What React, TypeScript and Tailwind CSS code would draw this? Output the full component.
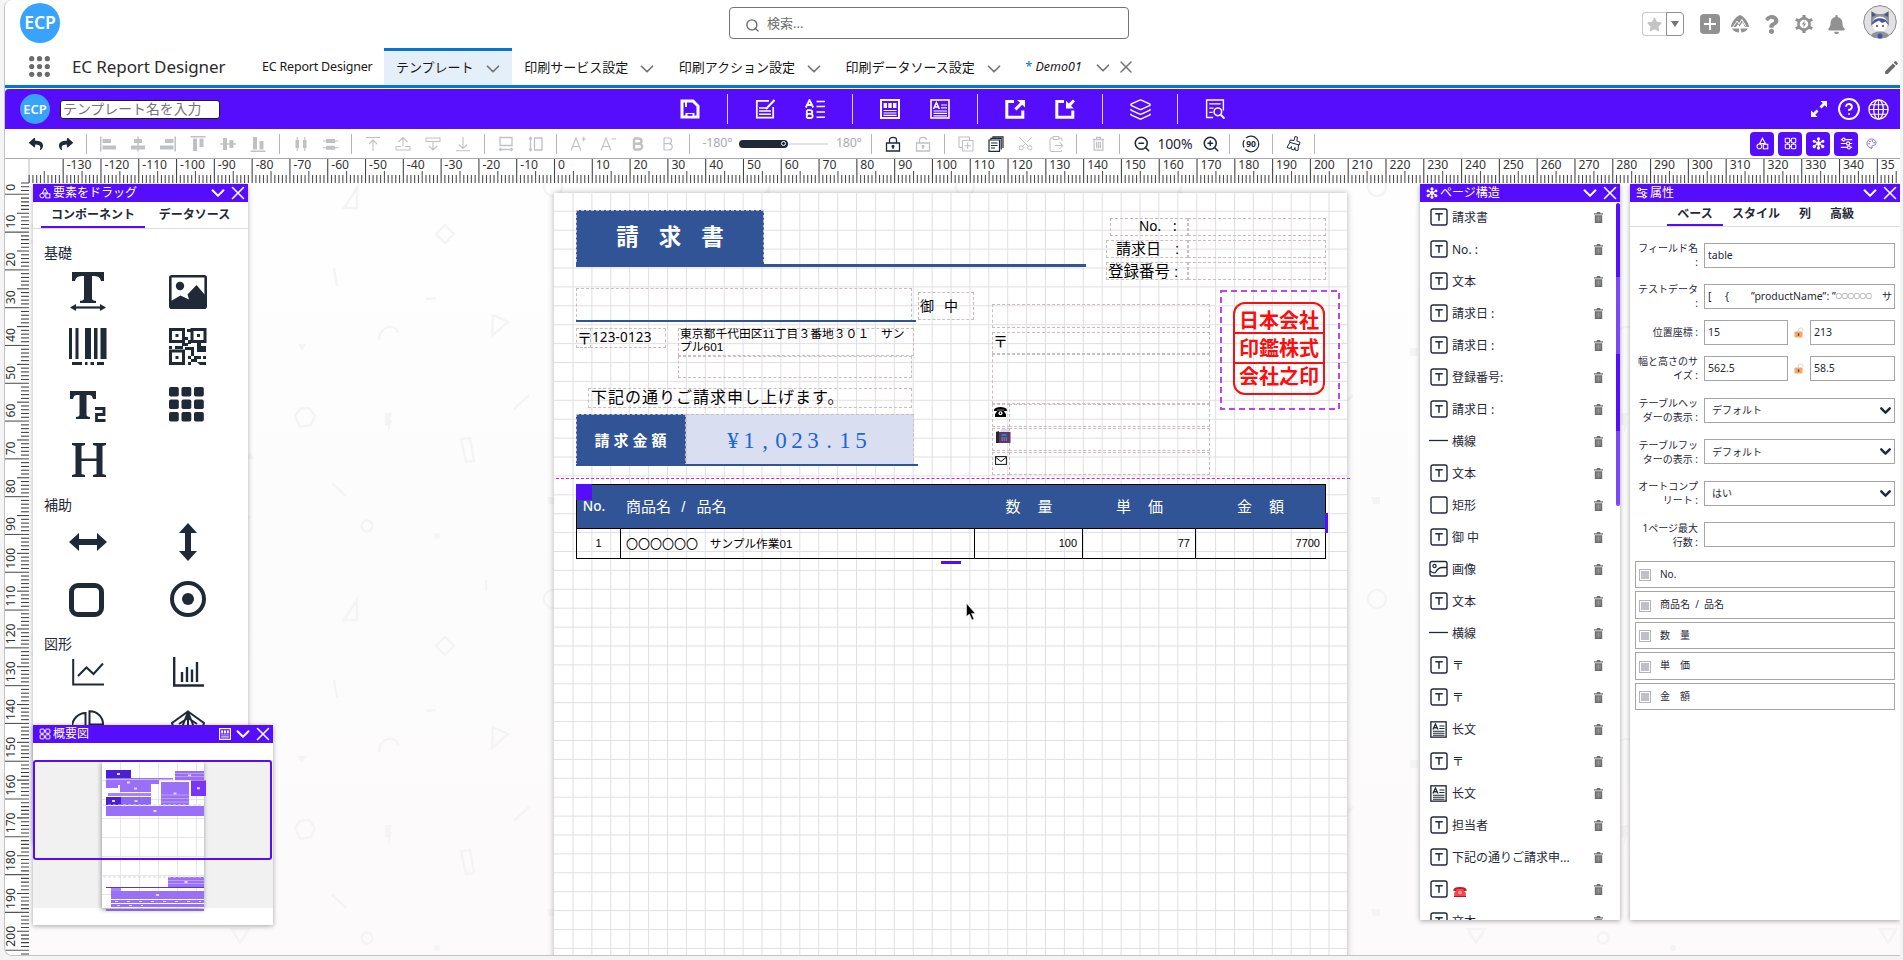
import React from "react";
import { FaReply, FaShare, FaStar, FaBell, FaQuestion } from "react-icons/fa";
import { MdEdit } from "react-icons/md";
import {
  ChevronDown, X, Search, Layers, CircleHelp, Scissors, ZoomIn, ZoomOut, Palette, ClipboardPaste,
} from "lucide-react";

const MM = 96 / 25.4;

type SvgProps = { w?: number; h?: number; vb?: string; className?: string; children: React.ReactNode };
const Svg = ({ w = 16, h, vb = "0 0 16 16", className = "", children }: SvgProps) => (
  <svg width={w} height={h ?? w} viewBox={vb} className={"shrink-0 " + className} fill="none" stroke="currentColor" strokeWidth="1.3">
    {children}
  </svg>
);
const F = { fill: "currentColor", stroke: "none" } as const;

/* ---------- shared glyphs ---------- */
const ShapesIcon = ({ s = 12 }) => (
  <Svg w={s} vb="0 0 16 16">
    <path d="M8 1.5 L11.5 8 H4.5 Z" />
    <circle cx="4.2" cy="11.5" r="3" />
    <rect x="9" y="9" width="5.5" height="5.5" />
  </Svg>
);
const TilesIcon = ({ s = 12 }) => (
  <Svg w={s}>
    <rect x="1.5" y="1.5" width="5.5" height="5.5" rx="1" />
    <rect x="9" y="1.5" width="5.5" height="5.5" rx="1" />
    <rect x="1.5" y="9" width="5.5" height="5.5" rx="1" />
    <rect x="9" y="9" width="5.5" height="5.5" rx="1" />
    <path d="M7 4.2 H9 M4.2 7 V9 M11.8 7 V9 M7 11.8 H9" />
  </Svg>
);
const NodesIcon = ({ s = 12 }) => (
  <Svg w={s} className="stroke-[1.4]">
    <path d="M8 2 V14 M2.5 5 L13.5 11 M13.5 5 L2.5 11" />
    <circle cx="8" cy="2.3" r="1.4" fill="currentColor" />
    <circle cx="2.6" cy="5.2" r="1.2" fill="currentColor" />
    <circle cx="13.4" cy="5.2" r="1.2" fill="currentColor" />
    <circle cx="8" cy="8" r="2" fill="currentColor" />
    <circle cx="2.8" cy="11.6" r="1.4" fill="currentColor" />
    <circle cx="13.2" cy="11.6" r="1.4" fill="currentColor" />
    <circle cx="8" cy="13.6" r="1.4" fill="currentColor" />
  </Svg>
);
const SlidersIcon = ({ s = 12 }) => (
  <Svg w={s} className="stroke-[1.4]">
    <path d="M1 3.2 H3 M6.5 3.2 H15 M1 8 H8 M12 8 H15 M1 12.8 H9 M13 12.8 H15" />
    <circle cx="4.5" cy="3.2" r="1.8" />
    <circle cx="10" cy="8" r="2" />
    <circle cx="11" cy="12.8" r="1.8" />
  </Svg>
);
const TableDoc = ({ s = 20 }) => (
  <Svg w={s} vb="0 0 20 20">
    <rect x="1" y="1" width="18" height="18" strokeWidth="2" />
    <rect x="3.6" y="4" width="3.4" height="5" {...F} />
    <rect x="8.3" y="4" width="3.4" height="5" {...F} />
    <rect x="13" y="4" width="3.4" height="5" {...F} />
    <path d="M3.5 11.5 H16.5 M3.5 14 H16.5 M3.5 16.4 H16.5" strokeWidth="1.2" />
  </Svg>
);
const LongText = ({ s = 20 }) => (
  <Svg w={s} vb="0 0 20 20">
    <rect x="1" y="1" width="18" height="18" strokeWidth="1.6" />
    <path d="M3.5 10 L6.4 3.6 L9.4 10 M4.6 8 H8.4" strokeWidth="1.6" />
    <path d="M11 6 H17 M11 8.8 H17 M3.5 12 H17 M3.5 14.4 H17 M3.5 16.8 H17" strokeWidth="1.2" />
  </Svg>
);
const Ecp = ({ big = false }) => (
  <div
    className={
      "flex shrink-0 items-center justify-center rounded-full bg-[#37a3fb] font-semibold leading-none text-white " +
      (big ? "h-10 w-10 text-[17.5px]" : "h-[30px] w-[30px] text-[13px]")
    }
  >
    ECP
  </div>
);

/* ---------- global header ---------- */
const Tab = ({ label, active = false }: { label: string; active?: boolean }) => (
  <div
    className={
      "flex h-[37px] items-center gap-[13px] border-t-[3px] pb-[1px] pl-3 pr-[13.5px] text-[13px] " +
      (active ? "border-[#0176d3] bg-[#e5eff9]" : "border-transparent")
    }
  >
    <span className="whitespace-nowrap leading-none">{label}</span>
    <ChevronDown size={22} strokeWidth={1.9} className="-mx-[5px] mt-[3px] text-[#747474]" />
  </div>
);

const GlobalHeader = () => (
  <div className="h-[88px] rounded-tl-lg border-b-[3px] border-[#0176d3] bg-white text-[#181818]">
    <div className="flex h-12 items-start pr-[3px]">
      <div className="ml-[15px] mt-[3px]"><Ecp big /></div>
      <div className="ml-[669px] mt-[7px] flex h-8 w-[400px] items-center gap-[7px] rounded border border-[#747474] pl-[15px] text-[13px] text-[#6b6b6b]">
        <Search size={15} strokeWidth={2.2} className="mt-1" />
        <span className="leading-none">検索...</span>
      </div>
      <div className="ml-auto mt-[4px] flex h-10 items-center text-[#919191]">
        <div className="flex h-6 w-[24px] items-center justify-center rounded-l border border-r-0 border-[#c9c9c9] text-[#c4c4c4]">
          <FaStar size={15} />
        </div>
        <div className="mr-[16px] flex h-6 w-[18px] items-center justify-center rounded-r border border-[#919191]">
          <Svg w={8} h={6} vb="0 0 8 6"><path d="M0 0 H8 L4 6 Z" fill="#747474" stroke="none" /></Svg>
        </div>
        <Svg w={20} vb="0 0 20 20"><rect width="20" height="20" rx="4" {...F} /><path d="M10 4 V16 M4 10 H16" stroke="#fff" strokeWidth="2" /></Svg>
        <Svg w={20} vb="0 0 20 20" className="ml-[10px]">
          <path d="M10 1 C6 2 1 9 1 13 L6 13 L8 10 L9.5 12.5 L12.5 8 L15 13 L19 13 C19 9 14 2 10 1 Z" {...F} />
          <path d="M2.5 13.5 L5.5 9.5 L7.2 7 L9 10 L12 5.5 L16 12.5" stroke="#fff" strokeWidth="1" />
          <path d="M2 14.5 H9 V18.5 C6 18.5 3.5 17 2 14.5 Z M10.5 14.5 H18 C16.5 17 13.5 18.5 11.5 18.5 Z" {...F} />
        </Svg>
        <FaQuestion size={19} className="ml-[12px]" />
        <Svg w={20} vb="0 0 20 20" className="ml-[13px]">
          <circle cx="10" cy="10" r="5.6" strokeWidth="2.6" />
          <path d="M8.4 1 H11.6 V4 H8.4 Z M8.4 16 H11.6 V19 H8.4 Z M1 6.5 L2.6 3.9 L5.4 5.4 L3.8 8 Z M19 6.5 L17.4 3.9 L14.6 5.4 L16.2 8 Z M1 13.5 L2.6 16.1 L5.4 14.6 L3.8 12 Z M19 13.5 L17.4 16.1 L14.6 14.6 L16.2 12 Z" {...F} />
          <path d="M10.8 6.4 L7.8 10.6 H9.8 L9.2 13.6 L12.2 9.4 H10.2 Z" {...F} />
        </Svg>
        <FaBell size={19} className="ml-[13px]" />
        <Svg w={34} vb="0 0 34 34" className="-mt-[5px] ml-[17px]">
          <circle cx="17" cy="17" r="16.3" fill="#e2e2e4" stroke="#8a8a8a" strokeWidth="1" />
          <path d="M8 6 L14 9 H20 L26 6 V17 C28 27 6 27 8 17 Z" fill="#8f9299" stroke="none" />
          <path d="M9 7 L13 10 L9 12 Z M25 7 L21 10 L25 12 Z" fill="#4a5487" stroke="none" />
          <ellipse cx="17" cy="19" rx="8" ry="7.5" fill="#fff" stroke="none" />
          <path d="M8.8 20 C8 11 26 11 25.2 20 L22.5 16.5 L19 18 L16 15.5 L12 17.5 Z" fill="#4656a0" stroke="none" />
          <circle cx="14" cy="21" r="1" fill="#444" stroke="none" /><circle cx="20" cy="21" r="1" fill="#444" stroke="none" />
          <path d="M8 31 C9 25 25 25 26 31 C22 34 12 34 8 31 Z" fill="#8f9299" stroke="none" />
          <circle cx="17" cy="31" r="2.5" fill="#4656a0" stroke="none" />
        </Svg>
      </div>
    </div>
    <div className="flex h-[37px] items-center">
      <Svg w={21} vb="0 0 21 21" className="ml-[24px]">
        {[2.7, 10.5, 18.3].map((y) => [2.7, 10.5, 18.3].map((x) => <circle key={x + "-" + y} cx={x} cy={y} r="2.6" fill="#6b6b6b" stroke="none" />))}
      </Svg>
      <span className="ml-[22px] w-[190px] whitespace-nowrap text-[17px] leading-none tracking-[-0.1px] text-[#2b2b2b]">EC Report Designer</span>
      <span className="mt-[2px] w-[122px] whitespace-nowrap text-[12.5px] leading-none tracking-[-0.2px]">EC Report Designer</span>
      <Tab label="テンプレート" active />
      <Tab label="印刷サービス設定" />
      <Tab label="印刷アクション設定" />
      <Tab label="印刷データソース設定" />
      <div className="flex h-[33px] items-center pl-[12px] pt-[1px] text-[13px]">
        <span className="text-[#0176d3]">*</span>
        <span className="ml-[3px] w-[61px] text-[12.5px] italic leading-none">Demo01</span>
        <ChevronDown size={22} strokeWidth={1.9} className="-mx-[5px] mt-[2px] text-[#747474]" />
        <X size={20} strokeWidth={1.8} className="ml-[7px] text-[#747474]" />
      </div>
      <MdEdit size={17} className="ml-auto mt-[2px] text-[#6b6b6b]" />
    </div>
  </div>
);

/* ---------- purple app bar ---------- */
const Slot = ({ children }: { children: React.ReactNode }) => (
  <div className="flex w-[50px] items-center justify-center">{children}</div>
);
const BarSep = () => (
  <div className="flex w-[25px] justify-center"><div className="h-[30px] w-px bg-white/80" /></div>
);

const AppBar = () => (
  <div className="mt-px flex h-10 items-center rounded-tl bg-[#560dfc] text-white">
    <div className="ml-[15px]"><Ecp /></div>
    <div className="ml-[10px] flex h-[19px] w-[160px] items-center rounded-[3px] border border-[#1c1c1c] bg-white pl-[2px] text-[13.9px] leading-none text-[#757575]">
      テンプレート名を入力
    </div>
    <div className="ml-[445px] flex items-center">
      <Slot>
        <Svg w={20} vb="0 0 20 20">
          <path d="M2 2 H13 L18 7 V18 H2 Z" strokeWidth="3" />
          <path d="M5.5 14 H14.5 V18 H5.5 Z" {...F} />
          <path d="M6 3 V8" strokeWidth="2" />
          <rect x="7.5" y="15" width="5" height="1.8" fill="#560dfc" stroke="none" />
        </Svg>
      </Slot>
      <BarSep />
      <Slot>
        <Svg w={20} vb="0 0 20 20">
          <path d="M14 1.8 H1.8 V18.6 H18.2 V8" strokeWidth="1.7" />
          <path d="M4 9 H11 M4 12 H16 M4 15.3 H16" strokeWidth="1.5" />
          <path d="M11 10 L19.5 1" strokeWidth="2" />
        </Svg>
      </Slot>
      <Slot>
        <Svg w={20} vb="0 0 20 20" className="stroke-[1.8]">
          <path d="M0.8 8.5 L4.5 1 L8.2 8.5 M2.3 6 H6.7" />
          <path d="M1.8 11.2 V19 M1.8 11.2 H5 C8 11.2 8 14.8 5 14.8 H1.8 M5 14.8 C8.6 14.8 8.6 19 5 19 H1.8" />
          <path d="M11.5 2.5 H20 M11.5 7.5 H20 M11.5 13 H20 M11.5 18.3 H20" strokeWidth="1.4" />
        </Svg>
      </Slot>
      <BarSep />
      <Slot><TableDoc /></Slot>
      <Slot><LongText /></Slot>
      <BarSep />
      <Slot>
        <Svg w={20} vb="0 0 20 20">
          <path d="M9 2.5 H1.8 V18.3 H17.8 V11.5" strokeWidth="3" />
          <path d="M12 1 H20 V8.5 L17.2 5.8 L11.5 11.5 L9.3 9.3 L15 3.7 Z" {...F} />
        </Svg>
      </Slot>
      <Slot>
        <Svg w={20} vb="0 0 20 20">
          <path d="M9 2.5 H1.8 V18.3 H17.8 V11.5" strokeWidth="3" />
          <path d="M18.8 9.5 H11 V1.8 L13.8 4.6 L18 0.5 L20 2.5 L16 6.7 Z" {...F} />
        </Svg>
      </Slot>
      <BarSep />
      <Slot><Layers size={23} strokeWidth={1.6} /></Slot>
      <BarSep />
      <Slot>
        <Svg w={20} vb="0 0 20 21">
          <path d="M8 19.5 H1.2 V1 H18.8 V12" strokeWidth="1.5" />
          <path d="M4 5 H16 M4 9.5 H8.5 M4 14 H7.5" />
          <circle cx="13" cy="13.5" r="4" strokeWidth="1.6" />
          <path d="M16 16.5 L20 20.5" strokeWidth="2" />
        </Svg>
      </Slot>
    </div>
    <div className="ml-auto mr-[11px] flex items-center">
      <Svg w={16} vb="0 0 16 16">
        <path d="M9.5 0 H16 V6.500 L13.700 4.200 L10.400 7.500 L8.500 5.600 L11.800 2.300 Z M6.500 16 H0 V9.500 L2.300 11.800 L5.600 8.500 L7.500 10.400 L4.200 13.700 Z" {...F} />
      </Svg>
      <CircleHelp size={24} strokeWidth={1.9} className="ml-[10px]" />
      <Svg w={21} vb="0 0 21 21" className="ml-[7px]">
        <circle cx="10.5" cy="10.5" r="9.6" />
        <ellipse cx="10.5" cy="10.5" rx="4.8" ry="9.6" />
        <path d="M10.5 1 V20 M1 10.5 H20 M2.500 5.800 H18.500 M2.500 15.200 H18.500" strokeWidth="1.1" />
      </Svg>
    </div>
  </div>
);

/* ---------- tool bar ---------- */
const T = ({ dark = false, children }: { dark?: boolean; children: React.ReactNode }) => (
  <div className={"flex w-[30px] items-center justify-center " + (dark ? "text-[#1f2937]" : "text-[#bfc1c5]")}>{children}</div>
);
const Sep = () => (
  <div className="flex w-[12.5px] justify-center"><div className="h-5 w-px bg-[#b5b5b5]" /></div>
);
const P = ({ d, fill = false, w = 1.3 }: { d: string; fill?: boolean; w?: number }) => (
  <Svg w={16}><path d={d} fill={fill ? "currentColor" : "none"} stroke={fill ? "none" : "currentColor"} strokeWidth={w} /></Svg>
);
const Toggle = ({ children }: { children: React.ReactNode }) => (
  <div className="flex h-6 w-6 items-center justify-center rounded bg-[#560dfc] text-white">{children}</div>
);

const ToolBar = () => (
  <div className="flex h-[29px] items-center bg-white pl-[15.5px]">
    <T dark><FaReply size={14} /></T>
    <T dark><FaShare size={14} /></T>
    <Sep />
    <T><P fill d="M0 0.5 H1.5 V15.5 H0 Z M2.5 3 H11 V7 H2.5 Z M2.5 9.5 H16 V13.5 H2.5 Z" /></T>
    <T><P fill d="M7.3 0.5 H8.7 V3 H12 V7 H8.7 V9.5 H15 V13.5 H8.7 V15.5 H7.3 V13.5 H1 V9.5 H7.3 V7 H4 V3 H7.3 Z" /></T>
    <T><P fill d="M14.5 0.5 H16 V15.5 H14.5 Z M5 3 H13.5 V7 H5 Z M0 9.5 H13.5 V13.5 H0 Z" /></T>
    <T><P fill d="M0.5 0 H15.5 V1.5 H0.5 Z M3 2.5 H7 V15 H3 Z M9.5 2.5 H13.5 V11 H9.5 Z" /></T>
    <T><P fill d="M0.5 7.3 H3 V2 H7 V7.3 H9.5 V4 H13.5 V7.3 H16 V8.7 H13.5 V12 H9.5 V8.7 H7 V14 H3 V8.7 H0.5 Z" /></T>
    <T><P fill d="M0.5 14.5 H15.5 V16 H0.5 Z M3 1 H7 V13.5 H3 Z M9.5 5 H13.5 V13.5 H9.5 Z" /></T>
    <Sep />
    <T><P fill d="M3.7 1 H4.8 V4 H6 V12 H4.8 V15 H3.7 V12 H2.5 V4 H3.7 Z M11.2 1 H12.3 V4 H13.5 V12 H12.3 V15 H11.2 V12 H10 V4 H11.2 Z" /></T>
    <T><P fill d="M0 4.5 H3 V3 H12 V4.5 H15.5 V5.5 H12 V7 H3 V5.5 H0 Z M0 11.2 H3 V9.8 H12 V11.2 H15.5 V12.2 H12 V13.7 H3 V12.2 H0 Z" /></T>
    <Sep />
    <T><P d="M1 1.5 H15 M8 15 V4 M4 8 L8 4 L12 8" w={1.1} /></T>
    <T><P d="M1 14 H15 V10.5 H10 M1 14 V10.5 H6 M3.5 6 L8 1.5 L12.5 6 M8 2 V10.5" w={1.1} /></T>
    <T><P d="M1 2 H15 V5.5 H1 Z M8 5.5 V14 M4 10 L8 14 L12 10" w={1.1} /></T>
    <T><P d="M1 14.8 H15 M8 1 V12 M4 8.5 L8 12.5 L12 8.5" w={1.1} /></T>
    <Sep />
    <T><P d="M2 1.5 H14 V9.5 H2 Z M1.5 13.5 H14.5 M3 12 L1.5 13.5 L3 15 M13 12 L14.5 13.5 L13 15" /></T>
    <T><P d="M6.5 2 H14 V14 H6.5 Z M2.5 1.5 V14.5 M1 3 L2.5 1.5 L4 3 M1 13 L2.5 14.5 L4 13" /></T>
    <Sep />
    <T><P d="M1 14.5 L6 2 L11 14.5 M2.8 10.5 H9.2 M11.5 3 H16 M13.7 0.8 V5.2" w={1.1} /></T>
    <T><P d="M1 14.5 L6 2 L11 14.5 M2.8 10.5 H9.2 M11.5 3 H16" w={1.1} /></T>
    <T><P d="M4 2.500 V13.500 M4 2.500 H8.500 C12.500 2.500 12.500 7.700 8.500 7.700 H4 M8.500 7.700 C13.500 7.700 13.500 13.500 8.500 13.500 H4" w={2.4} /></T>
    <T><P d="M4 2 V14 M4 2 H8.500 C12.500 2 12.500 7.700 8.500 7.700 H4 M8.500 7.700 C13.500 7.700 13.500 14 8.500 14 H4" w={1.2} /></T>
    <Sep />
    <div className="flex w-[170px] items-center pl-[7px] text-[12.5px] leading-none text-[#a9abb0]">
      <span className="w-[36.5px] tracking-[-0.2px]">-180°</span>
      <div className="flex h-2 w-[49px] items-center justify-end rounded-full bg-[#1f2937] pr-[2px]">
        <div className="h-[5px] w-[5px] rounded-full border border-white" />
      </div>
      <div className="h-[2px] w-10 bg-[#e3e3e3]" />
      <span className="ml-[8px] tracking-[-0.3px]">180°</span>
    </div>
    <Sep />
    <T dark><Svg w={16}><path d="M1.5 7 H14.5 V15 H1.5 Z M4.5 7 V4 C4.5 0.5 11.5 0.5 11.5 4 V7 M8 10.5 V13" /><circle cx="8" cy="10.3" r="0.9" fill="currentColor" /></Svg></T>
    <T><Svg w={16}><path d="M1.5 7 H14.5 V15 H1.5 Z M4.5 7 V4 C4.5 0.5 11.5 0.5 11.5 4 M8 10.5 V13" /><circle cx="8" cy="10.3" r="0.9" fill="currentColor" /></Svg></T>
    <Sep />
    <T><P d="M4.5 4.5 H15 V15 H4.5 Z M1 11.5 V1 H11.5 V4.5 M1 11.5 H4.5 M9.7 6.5 V13 M6.5 9.7 H13" w={1.1} /></T>
    <T dark><P d="M1 4 H11.5 V15.3 H1 Z M3 4 V2.4 H13.2 V13.5 M5 2.4 V0.8 H15 V12 M3 7 H9.5 M3 9.5 H9.5 M3 12 H7" w={1.2} /></T>
    <T><Scissors size={17} strokeWidth={1.4} className="rotate-[-90deg]" /></T>
    <T><ClipboardPaste size={18} strokeWidth={1.4} /></T>
    <Sep />
    <T><Svg w={15}><path d="M2 3.5 H14 M6 3 V1.5 H10 V3 M3.3 4 V15 H12.7 V4 Z M6 6 V13 M8 6 V13 M10 6 V13" /></Svg></T>
    <Sep />
    <div className="flex w-[98px] items-center pl-[7px] text-[#1f2937]">
      <ZoomOut size={18} strokeWidth={2} />
      <span className="ml-[7px] w-[44px] text-[14px] leading-none tracking-[-0.2px]">100%</span>
      <ZoomIn size={18} strokeWidth={2} />
    </div>
    <Sep />
    <T dark>
      <Svg w={18} vb="0 0 18 18">
        <path d="M4 3 A7.8 7.8 0 1 1 3.500 14.500" strokeWidth="1.2" />
        <path d="M2 12.500 A7.8 7.8 0 0 1 2.300 5" strokeWidth="1.2" />
        <text x="9" y="12.200" textAnchor="middle" fontSize="8.5" fontWeight="700" {...F}>90</text>
      </Svg>
    </T>
    <Sep />
    <T dark>
      <Svg w={17} vb="0 0 17 17" className="stroke-1">
        <path d="M9 5.5 L10 1.5 L12.5 2.2 L11.8 6 L15 7.2 L14.3 10 L4.5 7.3 L5.2 5 Z M4.8 7.5 L2 12.5 L5 13.5 L6.5 11.5 L6.2 14 L9 15 L10 12.5 L10.2 15.2 L13 15.5 L13.5 10" />
      </Svg>
    </T>
    <Sep />
    <div className="ml-auto mr-[23px] flex items-center gap-1">
      <Toggle><ShapesIcon s={13} /></Toggle>
      <Toggle><TilesIcon s={13} /></Toggle>
      <Toggle><NodesIcon s={13} /></Toggle>
      <Toggle><SlidersIcon s={13} /></Toggle>
      <Palette size={11} className="ml-[4px] text-[#7a68e8]" />
    </div>
  </div>
);

/* ---------- rulers ---------- */
const HRuler = () => {
  const ticks: React.ReactNode[] = [];
  for (let n = -139; n <= 355; n++) {
    const x = 549.5 + n * MM;
    if (x < 24 || x > 1893) continue;
    const ten = n % 10 === 0;
    const five = n % 5 === 0;
    ticks.push(
      <line key={n} x1={x} x2={x} y1={ten ? 1 : five ? 13 : 17} y2={25} stroke={ten ? "#444" : five ? "#555" : "#4d4d4d"} strokeWidth="1.1" />
    );
    if (ten && n > -140) {
      ticks.push(
        <text key={"t" + n} x={x + 3.5} y={11} fontSize="12.2" fill="#333">{n === 350 ? "35" : n}</text>
      );
    }
  }
  return (
    <svg width="1895" height="25" className="block shrink-0 overflow-visible">
      <rect width="1895" height="25" fill="#fff" />
      <rect width="1895" height="1" fill="#a9a9ae" />
      <rect x="23.5" width="1" height="25" fill="#bbb" />
      {ticks}
    </svg>
  );
};
const VRuler = () => {
  const ticks: React.ReactNode[] = [];
  for (let n = -3; n <= 201; n++) {
    const y = 11.3 + n * MM;
    const ten = n % 10 === 0;
    const five = n % 5 === 0;
    ticks.push(<line key={n} y1={y} y2={y} x1={ten ? 0 : five ? 12 : 16} x2={24} stroke={ten ? "#555" : "#444"} strokeWidth="1.1" />);
    if (ten && n >= 0) {
      ticks.push(
        <text key={"t" + n} transform={`translate(10 ${y - 3.5}) rotate(-90)`} fontSize="12.2" fill="#333">{n}</text>
      );
    }
  }
  return (
    <svg width="24" height="772" className="block shrink-0 overflow-visible">
      <rect width="24" height="772" fill="#fff" />
      {ticks}
    </svg>
  );
};

/* ---------- workspace background ---------- */
const Backdrop = () => (
  <svg className="absolute inset-0" width="1871" height="772">
    <defs>
      <linearGradient id="fade" x1="0" y1="0" x2="0" y2="1">
        <stop offset="0" stopColor="#fefefe" />
        <stop offset="1" stopColor="#fcfafb" />
      </linearGradient>
      <pattern id="doodle" x="191" y="-19" width="412" height="412" patternUnits="userSpaceOnUse">
        <g fill="none" stroke="#f5f4f5" strokeWidth="2.4">
          <path d="M124 44 H137 V24 Z M216 70 L225 61 L234 70 L225 79 Z M114 104 L117 122 M206 135 L216 134" />
          <path d="M273 151 L288 158 L272 172 Z M159 176 C160 160 177 160 178 169" />
          <path d="M75 252 L80 245 L89 244 L95 252 L91 261 L80 263 Z M241 275 L250 274 L254 297 L246 298 Z" />
          <path d="M294 245 L309 231 M112 319 L126 332 M266 4 V15" />
          <circle cx="147" cy="362" r="5.5" />
          <circle cx="333" cy="23" r="9" />
          <path d="M12 353 H29 L20 367 Z" />
        </g>
        <g fill="#f5f4f5">
          <path d="M78 180 H86 L82 187 Z M165 249 H172 L170 256 H172 L168 270 V261 H165 Z M327 333 H336 V340 H329 Z M366 184 H374 V192 H366 Z M26 295 L30 288 L34 295 Z" />
          <circle cx="217" cy="372" r="3" />
        </g>
      </pattern>
    </defs>
    <rect width="1871" height="772" fill="url(#fade)" />
    <rect width="1871" height="772" fill="url(#doodle)" />
  </svg>
);

/* ---------- invoice sheet ---------- */
const Field = ({ pos, children }: { pos: string; children?: React.ReactNode }) => (
  <div className={"absolute flex items-center whitespace-nowrap border border-dashed border-[#cdbcc0] leading-none " + pos}>{children}</div>
);

const Sheet = () => (
  <div className="absolute left-[525px] top-[10px] h-[790px] w-[793px] bg-white font-['Liberation_Sans','Noto_Sans_CJK_JP',sans-serif] text-black shadow-[0_0_6px_rgba(0,0,0,0.3)]">
    <svg className="absolute inset-0" width="793" height="790">
      {Array.from({ length: 41 }, (_, i) => (
        <rect key={"v" + i} x={18.5 + i * 18.9} y="0" width="1" height="790" fill="#e0e0e3" />
      ))}
      {Array.from({ length: 41 }, (_, i) => (
        <rect key={"h" + i} y={17.8 + i * 18.9} x="0" height="1" width="793" fill="#e0e0e3" />
      ))}
    </svg>

    <Field pos="left-[22px] top-[17px] h-[57px] w-[188px] justify-center bg-[#305496] text-[22.5px] font-bold text-white">
      <span className="mr-[20px]">請</span><span className="mr-[20px]">求</span>書
    </Field>
    <div className="absolute left-[22px] top-[71px] h-[3px] w-[510px] bg-[#305496]" />
    <Field pos="left-[22px] top-[95px] h-[34px] w-[336px]" />
    <div className="absolute left-[22px] top-[127px] h-[2px] w-[340px] bg-[#305496]" />
    <Field pos="left-[364px] top-[99px] h-7 w-14 pl-[1px] text-[14px]"><span className="mr-[10px]">御</span>中</Field>

    <Field pos="left-[22px] top-[135px] h-5 w-[15px] text-[15px]">〒</Field>
    <Field pos="left-[36px] top-[135px] h-5 w-[76px] pl-[1px] font-['Noto_Sans'] text-[13.5px] tracking-[0.15px]">123-0123</Field>
    <div className="absolute left-[124px] top-[135px] h-[28px] w-[236px] whitespace-nowrap border border-dashed border-[#cdbcc0] pl-[1px] text-[11.8px] leading-[13px]">
      <div className="-mt-px">東京都千代田区11丁目３番地３０１　サン<br />プル601</div>
    </div>
    <Field pos="left-[124px] top-[163px] h-[22px] w-[234px]" />
    <Field pos="left-[34px] top-[195px] h-5 w-[324px] pl-[2px] text-[16px] tracking-[1px]">下記の通りご請求申し上げます。</Field>
    <Field pos="left-[22px] top-[221px] h-[52px] w-[110px] justify-center bg-[#305496] pl-[3px] text-[15px] font-bold tracking-[4px] text-white">請求金額</Field>
    <Field pos="left-[132px] top-[221px] h-[52px] w-[228px] bg-[#d9dff1] pl-[38px] font-['Liberation_Serif'] text-[23px] text-[#1a67d6]">
      {"¥1,023.15".split("").map((c, i) => <span key={i} className="w-4 text-center">{c}</span>)}
    </Field>
    <div className="absolute left-[22px] top-[271px] h-[2px] w-[342px] bg-[#305496]" />

    <Field pos="left-[556px] top-[25px] h-[18px] w-[78px] pl-[28px] font-['Noto_Sans'] text-[13.5px]">No.<span className="ml-[12px]">:</span></Field>
    <Field pos="left-[552px] top-[47px] h-[18px] w-[82px] pb-[2px] pl-[9px] text-[15px]">請求日<span className="ml-[14px]">:</span></Field>
    <Field pos="left-[552px] top-[69px] h-[18px] w-[82px] pl-[1px] pt-[2px] text-[15.5px]">登録番号<span className="ml-[4px]">:</span></Field>
    <Field pos="left-[634px] top-[25px] h-[18px] w-[138px]" />
    <Field pos="left-[634px] top-[47px] h-[18px] w-[138px]" />
    <Field pos="left-[634px] top-[69px] h-[18px] w-[138px]" />

    <Field pos="left-[438px] top-[111px] h-6 w-[218px]" />
    <Field pos="left-[438px] top-[139px] h-[22px] w-[218px] text-[15px]"><span className="-mt-[3px]">〒</span></Field>
    <Field pos="left-[438px] top-[161px] h-[50px] w-[218px]" />
    <Field pos="left-[438px] top-[211px] h-[23px] w-[18px]" />
    <Field pos="left-[455px] top-[211px] h-[23px] w-[201px]" />
    <Field pos="left-[438px] top-[235px] h-[23px] w-[18px]" />
    <Field pos="left-[455px] top-[235px] h-[23px] w-[201px]" />
    <Field pos="left-[438px] top-[259px] h-[23px] w-[18px]" />
    <Field pos="left-[455px] top-[259px] h-[23px] w-[201px]" />
    <svg className="absolute left-[440px] top-[213px]" width="13" height="11" viewBox="0 0 14 12">
      <path d="M0 4 C1 0 13 0 14 4 V5.5 H10.5 V4 H3.5 V5.5 H0 Z M4 4.5 H10 L13 9 V12 H1 V9 Z" fill="#000" />
      <circle cx="7" cy="7.8" r="2.2" fill="#fff" /><circle cx="7" cy="7.8" r="0.9" fill="#000" />
    </svg>
    <svg className="absolute left-[442px] top-[236px]" width="15" height="15" viewBox="0 0 15 15">
      <path d="M5 0 L13 0 V4 H4 Z" fill="#dcdce4" />
      <path d="M0 3 L3 2 V14 H0 Z" fill="#26262c" />
      <rect x="3" y="3" width="11.5" height="11" fill="#5b3a68" />
      <rect x="5.5" y="5" width="5" height="2" fill="#2c7de0" />
      <path d="M5.5 9 H11 M5.5 11 H11" stroke="#8fb0d8" strokeWidth="1.1" strokeDasharray="1.3 0.8" />
    </svg>
    <svg className="absolute left-[441px] top-[263px]" width="12" height="9" viewBox="0 0 12 9" fill="none" stroke="#111">
      <rect x="0.6" y="0.6" width="10.8" height="7.8" /><path d="M1 1.5 L6 5.5 L11 1.5" />
    </svg>

    <svg className="absolute left-[666px] top-[97px]" width="120" height="120">
      <rect x="1" y="1" width="118" height="118" fill="none" stroke="#c243ee" strokeWidth="2" strokeDasharray="6 4" />
    </svg>
    <div className="absolute left-[679px] top-[109px] flex h-[93px] w-[92px] flex-col divide-y-2 divide-[#fd0d0d] rounded-[12px] border-2 border-[#fd0d0d] text-[20px] font-bold leading-none text-[#fd0d0d]">
      <div className="flex h-[30px] items-center justify-center pt-[5px]">日本会社</div>
      <div className="flex h-[30px] items-center justify-center pt-[2px]">印鑑株式</div>
      <div className="flex flex-1 items-center justify-center pb-[3px]">会社之印</div>
    </div>

    <div className="absolute left-[2px] top-[285px] w-[794px] border-t border-dashed border-[#e01fc6]" />

    <div className="absolute left-[22px] top-[291px] w-[750px] border border-black text-[12px] leading-none">
      <div className="flex h-[44px] items-center border-b border-black bg-[#305496] text-[15px] text-white">
        <div className="w-[44px] pr-[12px] text-center font-['Noto_Sans'] text-[13.5px] font-medium"><span className="ml-[2px]">No.</span></div>
        <div className="w-[354px] pl-[5px]">商品名 <span className="mx-[6px]">/</span> <span className="ml-px">品名</span></div>
        <div className="flex w-[108px] justify-center gap-[17px]"><span>数</span><span>量</span></div>
        <div className="flex w-[113px] justify-center gap-[17px]"><span>単</span><span>価</span></div>
        <div className="flex flex-1 justify-center gap-[17px]"><span>金</span><span>額</span></div>
      </div>
      <div className="flex h-[29px] divide-x divide-black">
        <div className="flex w-[44px] items-center justify-center text-[11px]">1</div>
        <div className="flex w-[354px] items-center pl-[5px] text-[11.7px]"><span className="font-['Noto_Sans_CJK_JP'] text-[12px]">〇〇〇〇〇〇</span>　サンプル作業01</div>
        <div className="flex w-[108px] items-center justify-end pr-[5px] text-[11px]">100</div>
        <div className="flex w-[113px] items-center justify-end pr-[5px] text-[11px]">77</div>
        <div className="flex flex-1 items-center justify-end pr-[5px] text-[11px]">7700</div>
      </div>
    </div>
    <div className="absolute left-[22px] top-[291px] h-4 w-4 bg-[#560dfc]" />
    <div className="absolute left-[771px] top-[320px] h-[20px] w-[3px] bg-[#560dfc]" />
    <div className="absolute left-[387px] top-[368px] h-[3px] w-[20px] bg-[#560dfc]" />
    <svg className="absolute left-[412px] top-[410px]" width="10" height="18" viewBox="0 0 10 18">
      <path d="M0.5 0.5 V13.5 L3.4 11 L6 17 L8 16 L5.5 10.4 H9.3 Z" fill="#000" stroke="#fff" strokeWidth="0.5" />
    </svg>
  </div>
);

/* ---------- floating panels ---------- */
const PanelHead = ({ icon, title, extra }: { icon: React.ReactNode; title: string; extra?: React.ReactNode }) => (
  <div className="flex h-[18px] shrink-0 items-center bg-[#560dfc] pl-[6px] text-white">
    {icon}
    <span className="ml-[2px] text-[12px] leading-none">{title}</span>
    <div className="ml-auto flex items-center">
      {extra}
      <div className="flex w-5 justify-center"><ChevronDown size={22} strokeWidth={2.2} className="shrink-0" /></div>
      <div className="flex w-5 justify-center"><X size={22} strokeWidth={1.7} className="shrink-0" /></div>
    </div>
  </div>
);

const Cell = ({ children }: { children?: React.ReactNode }) => (
  <div className="flex h-full w-[100px] items-center justify-center text-[#1f2937]">{children}</div>
);

const ComponentsPanel = () => (
  <div className="absolute left-[4px] top-[1px] flex h-[660px] w-[215px] flex-col bg-white text-[#1f2937] shadow-[0_1px_5px_rgba(0,0,0,0.3)]">
    <PanelHead icon={<ShapesIcon />} title="要素をドラッグ" />
    <div className="flex h-[27px] border-b border-[#dcdcdc] pl-2 text-[12px] font-bold leading-none">
      <div className="flex w-[104px] items-center justify-center border-b-2 border-[#560dfc] pt-[2px]">コンポーネント</div>
      <div className="flex w-[99px] items-center justify-center">データソース</div>
    </div>
    <div className="pl-[11px] pt-[17px] text-[14px] leading-none">基礎</div>
    <div className="ml-[5px] mt-[8px] flex h-[46px] items-center">
      <Cell>
        <Svg w={36} h={40} vb="0 0 36 40">
          <path d="M2 1 H34 V10 H31 C30 6 28 5 22 5 V27 C22 29.500 24 29.500 26 30 V32 H10 V30 C12 29.500 14 29.500 14 27 V5 C8 5 6 6 5 10 H2 Z" {...F} />
          <path d="M4 36.500 H32" strokeWidth="2.200" /><path d="M0 36.500 L6 33 V40 Z M36 36.500 L30 33 V40 Z" {...F} />
        </Svg>
      </Cell>
      <Cell>
        <Svg w={38} h={34} vb="0 0 38 34" className="mt-[2px]">
          <rect x="1.3" y="1.3" width="35.4" height="31.4" rx="1.500" strokeWidth="2.600" />
          <circle cx="11" cy="11" r="4.200" {...F} />
          <path d="M2 26 L11.500 20.500 L20 24.500 L18.500 19.500 L27.500 10 L36 20 V33 H2 Z" {...F} />
        </Svg>
      </Cell>
    </div>
    <div className="ml-[5px] flex h-[64px] items-center">
      <Cell>
        <Svg w={38} h={37} vb="0 0 38 37">
          <path d="M0 0 H3 V31 H0 Z M6.500 0 H9.500 V31 H6.500 Z M16 0 H22 V31 H16 Z M25 0 H28.500 V31 H25 Z M31.500 0 H37.500 V31 H31.500 Z M3 34 H13 V37 H3 Z M16 34 H18.500 V37 H16 Z M21.500 34 H25 V37 H21.500 Z M28 34 H35 V37 H28 Z" {...F} />
        </Svg>
      </Cell>
      <Cell>
        <Svg w={38} h={37} vb="0 0 38 37">
          <path d="M1.500 1.500 H14.500 V13.500 H1.500 Z M23 1.500 H36 V13.500 H23 Z M1.500 23 H14.500 V35.500 H1.500 Z" strokeWidth="3" />
          <path d="M6.500 6 H9.500 V9 H6.500 Z M28 6 H31 V9 H28 Z M6.500 28 H9.500 V31 H6.500 Z M16 9 H19 V12 H16 Z M18 1 H22 V4 H18 Z M19 12 H22 V16 H19 Z M13 15 H19 V18 H13 Z M0 18 H3 V21 H0 Z M6 18 H14 V21 H6 Z M16 19 H25 V25 H22 V22 H16 Z M28 15 H32 V18 H37 V24 H28 Z M19 28 H22 V31 H19 Z M22 25 H25 V28 H32 V31 H28 V34 H22 V31 H25 V28 H22 Z M34 28 H37 V31 H34 Z M19 34 H22 V37 H19 Z M28 34 H37 V37 H31 Z" {...F} />
        </Svg>
      </Cell>
    </div>
    <div className="ml-[5px] flex h-[52px] items-center">
      <Cell>
        <Svg w={36} h={32} vb="0 0 36 32" className="mt-1">
          <path d="M0 1 H26 V9 H23 C22 5 21 5 16.500 5 V24 C16.500 26.500 17.500 26.500 20 27 V29 H6 V27 C8.500 26.500 9.500 26.500 9.500 24 V5 C5 5 4 5 3 9 H0 Z" {...F} />
          <path d="M25 18.500 H34 V24.500 H26.500 V30.500 H35.500" strokeWidth="2.800" />
        </Svg>
      </Cell>
      <Cell>
        <Svg w={36} h={35} vb="0 0 36 35" className="-ml-[3px]">
          {[0, 12.500, 25].map((y) => [0, 12.500, 25].map((x) => <rect key={x + "," + y} x={x} y={y} width="9.800" height="9.500" rx="1.800" {...F} />))}
        </Svg>
      </Cell>
    </div>
    <div className="ml-[5px] flex h-[58px] items-center">
      <Cell>
        <Svg w={34} h={34} vb="0 0 34 34" className="ml-[2px] mt-[2px]">
          <path d="M0 0 H13 V2 L9.500 3 V15.500 H24.500 V3 L21 2 V0 H34 V2 L30.500 3 V31 L34 32 V34 H21 V32 L24.500 31 V18 H9.500 V31 L13 32 V34 H0 V32 L3.500 31 V3 L0 2 Z" {...F} />
        </Svg>
      </Cell>
    </div>
    <div className="pl-[11px] pt-[10px] text-[14px] leading-none">補助</div>
    <div className="ml-[5px] mt-[6px] flex h-[48px] items-center">
      <Cell>
        <Svg w={38} h={18} vb="0 0 38 18"><path d="M0 9 L10 0 V6 H28 V0 L38 9 L28 18 V12 H10 V18 Z" {...F} /></Svg>
      </Cell>
      <Cell>
        <Svg w={18} h={38} vb="0 0 18 38"><path d="M9 0 L18 10 H12 V28 H18 L9 38 L0 28 H6 V10 H0 Z" {...F} /></Svg>
      </Cell>
    </div>
    <div className="ml-[5px] flex h-[66px] items-center">
      <Cell>
        <div className="-ml-[3px] mt-[2px] h-[34px] w-[35px] rounded-[9px] border-[5.500px] border-[#1f2937]" />
      </Cell>
      <Cell>
        <div className="flex h-[36px] w-[36px] items-center justify-center rounded-full border-[4.500px] border-[#1f2937]">
          <div className="h-3 w-3 rounded-full bg-[#1f2937]" />
        </div>
      </Cell>
    </div>
    <div className="pl-[11px] pt-[5px] text-[14px] leading-none">図形</div>
    <div className="ml-[5px] flex h-[42px] items-center">
      <Cell>
        <Svg w={32} h={27} vb="0 0 32 27" className="stroke-2"><path d="M1.200 0 V25.500 H32 M6 17 L14.500 8.500 L21.500 15 L31 4.500" /></Svg>
      </Cell>
      <Cell>
        <Svg w={31} h={30} vb="0 0 31 30" className="stroke-[2.400]"><path d="M1.200 0 V28.500 H31 M9 15 V25 M14 10 V25 M19 12.500 V25 M24 5 V25" /></Svg>
      </Cell>
    </div>
    <div className="ml-[5px] mt-[17px] flex h-[32px] items-start">
      <Cell>
        <Svg w={32} h={32} vb="0 0 32 32" className="stroke-2"><path d="M13.500 3 V18 H28 A14 14 0 1 1 13.500 3 Z M17.500 1.200 A13 13 0 0 1 31 14.500 H17.500 Z" /></Svg>
      </Cell>
      <Cell>
        <Svg w={34} h={32} vb="0 0 34 32" className="stroke-2"><path d="M17 1.500 L33 13 L27 31 H7 L1 13 Z M17 1.500 V31 M17 8 L26 14 M17 8 L8 14 M17 2 L10 20 M17 2 L24 20" /></Svg>
      </Cell>
    </div>
  </div>
);

/* overview blocks: x, y, width, height, fill */
const blocks: [number, number, number, number, string][] = [
  [73, 8, 25, 8, "#4a1fd8"], [73, 16, 67, 1.500, "#9a70f8"], [142, 9, 29, 9, "#9a6df8"], [73, 18, 45, 5, "#9a70f8"],
  [118, 18, 8, 4, "#9a70f8"], [73, 23, 12, 3, "#9a70f8"], [87, 23, 31, 7, "#9a70f8"], [75, 31, 43, 3, "#a884fa"],
  [128, 20, 28, 23, "#9a70f8"], [158, 18.500, 15, 15.500, "#7a35f8"], [73, 35, 15, 8, "#4a1fd8"], [88, 35, 30, 8, "#8e68f6"],
  [73, 44, 98, 10, "#9a70f8"], [135, 115, 36, 10, "#9a70f8"], [73, 125, 98, 1, "#5a3ab0"], [78, 129, 93, 8, "#9a70f8"],
  [78, 138, 93, 3, "#9a70f8"], [78, 142, 93, 3, "#9a70f8"], [73, 147, 98, 2, "#8a60f0"], [78, 126, 10, 3, "#a884fa"],
];

const OverviewPanel = () => (
  <div className="absolute left-[4px] top-[542px] h-[200px] w-[240px] bg-white shadow-[0_1px_5px_rgba(0,0,0,0.35)]">
    <PanelHead icon={<TilesIcon />} title="概要図" extra={<span className="mr-[2px]"><TableDoc s={12} /></span>} />
    <svg width="240" height="182" className="block">
      <defs>
        <filter id="soft" x="-20%" y="-20%" width="140%" height="140%"><feGaussianBlur stdDeviation="2" /></filter>
      </defs>
      <rect y="17" width="240" height="148" fill="#f1f1f1" />
      <rect x="68" y="20" width="103" height="147" fill="#000" opacity="0.35" filter="url(#soft)" />
      <rect x="69" y="19" width="102" height="146" fill="#fff" />
      {[87, 106, 125, 144, 163].map((x) => <rect key={x} x={x} y="19" width="1" height="146" fill="#e6e6e8" />)}
      {[37, 56, 75, 94, 113, 132, 151].map((y) => <rect key={y} x="69" y={y} width="102" height="1" fill="#e6e6e8" />)}
      <g transform="translate(0 19)">
        {blocks.map(([x, y, w, h, c], i) => (
          <g key={i}>
            <rect x={x} y={y} width={w} height={h} fill={c} />
            {h > 4 && <rect x={x + w / 2 - 1.500} y={y + h / 2 - 1} width="3" height="2" fill="#e2d6fd" />}
          </g>
        ))}
        <path d="M142 11.500 H171 M142 14.500 H171 M128 33 H156 M128 36.500 H156 M128 40 H156 M135 118.500 H171 M135 121.500 H171" stroke="#c4abfc" strokeWidth="0.800" />
        <path d="M70 43 H173 M70 115 H173" stroke="#d8d0ee" strokeDasharray="3 2" />
        <path d="M82 139.500 H168 M84 143.500 H110" stroke="#e2d6fd" strokeDasharray="3 9" />
      </g>
      <rect x="1" y="18" width="237" height="98" rx="2" fill="none" stroke="#560dfc" strokeWidth="2" />
    </svg>
  </div>
);

const Trash = () => (
  <Svg w={9} h={11} vb="0 0 9 11" className="-ml-px">
    <path d="M0 1.300 H2.800 V0 H6.200 V1.300 H9 V2.500 H0 Z M0.800 3.200 H8.200 V11 H0.800 Z" fill="#6d6e73" stroke="none" />
    <path d="M3 4.500 V9.500 M4.500 4.500 V9.500 M6 4.500 V9.500" stroke="#b5b5b9" strokeWidth="0.600" />
  </Svg>
);
const rowIcons: Record<string, React.ReactNode> = {
  t: <Svg w={18} vb="0 0 18 18" className="-ml-[1px]"><rect x="1" y="1" width="16" height="16" rx="2" strokeWidth="1.400" /><path d="M5.300 5.800 H12.700 M9 5.800 V12.800" strokeWidth="1.500" /></Svg>,
  line: <Svg w={19} h={18} vb="0 0 19 18" className="-ml-[2px]"><path d="M0 8.500 H19" /></Svg>,
  rect: <Svg w={18} vb="0 0 18 18" className="-ml-[1px]"><rect x="1" y="1" width="16" height="16" rx="2" strokeWidth="1.400" /></Svg>,
  img: <Svg w={19} h={18} vb="0 0 19 18" className="-ml-[2px]"><rect x="1" y="1.500" width="17" height="14.500" rx="2" strokeWidth="1.400" /><circle cx="5.500" cy="6" r="1.600" /><path d="M1 11 C4 13 4 13.500 6.500 12.500 C8 10 9 7.500 13 7.500 H18" /></Svg>,
  long: <span className="-ml-[1px]"><LongText s={17} /></span>,
};
const rows: [string, string][] = [
  ["t", "請求書"], ["t", "No. :"], ["t", "文本"], ["t", "請求日 :"], ["t", "請求日 :"], ["t", "登録番号:"], ["t", "請求日 :"],
  ["line", "横線"], ["t", "文本"], ["rect", "矩形"], ["t", "御 中"], ["img", "画像"], ["t", "文本"], ["line", "横線"],
  ["t", "〒"], ["t", "〒"], ["long", "长文"], ["t", "〒"], ["long", "长文"], ["t", "担当者"], ["t", "下記の通りご請求申..."],
  ["t", "phone"], ["t", "文本"],
];

const StructurePanel = () => (
  <div className="absolute left-[1391px] top-[1px] flex h-[736px] w-[200px] flex-col overflow-hidden bg-white text-[#1f2937]">
    <PanelHead icon={<NodesIcon />} title="ページ構造" />
    <div className="flex min-h-0 flex-1">
      <div className="flex-1 overflow-hidden pl-[11px]">
        <div className="-mt-[1px]">
          {rows.map(([k, label], i) => (
            <div key={i} className="flex h-8 items-center">
              <div className="flex w-[21px] shrink-0">{rowIcons[k]}</div>
              <div className="w-[143px] pt-[1px] text-[12px] leading-none">
                {label === "phone" ? (
                  <svg width="14" height="11" viewBox="0 0 14 11" className="mt-1 ml-[1px]">
                    <path d="M0.500 3.500 C1 0 13 0 13.500 3.500 V5 H10 V3.500 H4 V5 H0.500 Z" fill="#c01d2e" />
                    <path d="M4 3 H10 L12.800 7 V11 H1.200 V7 Z" fill="#f2444f" />
                    <path d="M1 10 H13 V11 H1 Z" fill="#b01a2a" /><circle cx="7" cy="6.500" r="2" fill="#fb8c92" />
                  </svg>
                ) : label}
              </div>
              <Trash />
            </div>
          ))}
        </div>
      </div>
      <div className="mt-px flex h-[303px] w-1 flex-col overflow-hidden rounded-full">
        <div className="h-[74px] bg-[#560dfc]" />
        <div className="h-[77px] bg-[#7f45fb]" />
        <div className="h-[77px] bg-[#560dfc]" />
        <div className="flex-1 bg-[#7f45fb]" />
      </div>
    </div>
  </div>
);

const boxCls = "flex h-[25px] items-center overflow-hidden whitespace-nowrap border border-[#a6a6a6] bg-white pl-[3px] text-[10.500px] leading-none";
const Row = ({ label, className = "", children }: { label: string[]; className?: string; children: React.ReactNode }) => (
  <div className={"flex h-7 items-center " + className}>
    <div className="w-[64px] pr-[1px] text-right text-[10px] leading-[14px]">
      {label.map((l) => <div key={l} className="whitespace-nowrap">{l}</div>)}
    </div>
    <div className="ml-[5px] flex flex-1 items-center">{children}</div>
  </div>
);
const Select = ({ value }: { value: string }) => (
  <div className={boxCls + " w-[191px] justify-between pl-[7px]"}>
    <span className="text-[10px]">{value}</span>
    <ChevronDown size={17} strokeWidth={3.4} />
  </div>
);
const Pair = ({ a, b }: { a: string; b: string }) => (
  <>
    <div className={boxCls + " w-[84px]"}>{a}</div>
    <Svg w={10} h={11} vb="0 0 10 11" className="mx-[6px]">
      <path d="M4.500 4.500 V2.500 C4.500 0.500 8.800 0.500 8.800 2.500 V4" stroke="#ddd" strokeWidth="1.200" />
      <rect x="0.500" y="4.500" width="8" height="6" rx="0.800" fill="#f6a868" stroke="none" />
      <rect x="3.900" y="6.300" width="1.300" height="2.600" fill="#7a3d10" stroke="none" />
    </Svg>
    <div className={boxCls + " w-[85px]"}>{b}</div>
  </>
);

const PropertiesPanel = () => (
  <div className="absolute left-[1601px] top-[1px] flex h-[736px] w-[270px] flex-col bg-white text-[#1f2937]">
    <PanelHead icon={<SlidersIcon />} title="属性" />
    <div className="flex h-[25px] border-b border-[#dcdcdc] pl-[37px] text-[12px] font-bold leading-none">
      <div className="flex w-[56px] items-center justify-center border-b-2 border-[#560dfc] pt-[1px]">ベース</div>
      <div className="flex w-[66px] items-center justify-center pb-[1px]">スタイル</div>
      <div className="flex w-[32px] items-center justify-center pb-[1px]">列</div>
      <div className="flex w-[42px] items-center justify-center pb-[1px]">高級</div>
    </div>
    <div className="pl-[5px] pt-[14px]">
      <Row label={["フィールド名", ":"]}><div className={boxCls + " w-[191px]"}>table</div></Row>
      <Row className="mt-[13px]" label={["テストデータ", ":"]}>
        <div className={boxCls + " w-[191px] whitespace-pre"}>
          {"[     {        \u201dproductName\u201d: \u201d"}
          <span className="text-[6px] font-bold">○○○○○○</span>
          <span className="ml-[10px]">サ</span>
        </div>
      </Row>
      <Row className="mt-[8px]" label={["位置座標 :"]}><Pair a="15" b="213" /></Row>
      <Row className="mt-[8px]" label={["幅と高さのサ", "イズ :"]}><Pair a="562.5" b="58.5" /></Row>
      <Row className="mt-[14px]" label={["テーブルヘッ", "ダーの表示 :"]}><Select value="デフォルト" /></Row>
      <Row className="mt-[13.500px]" label={["テーブルフッ", "ターの表示 :"]}><Select value="デフォルト" /></Row>
      <Row className="mt-[13.500px]" label={["オートコンプ", "リート :"]}><Select value="はい" /></Row>
      <Row className="mt-[13.500px]" label={["1ページ最大", "行数 :"]}><div className={boxCls + " w-[191px]"} /></Row>
    </div>
    <div className="mt-[12px] flex flex-col gap-[3px] pl-[5px]">
      {["No.", "商品名  /  品名", "数　量", "単　価", "金　額"].map((t) => (
        <div key={t} className="flex h-[27.500px] w-[260px] items-center whitespace-pre border border-[#a6a6a6] pl-[3px] text-[10px] leading-none">
          <div className="mt-[2px] flex h-3 w-3 items-center justify-center border border-[#b4b4b8]"><div className="h-2 w-2 bg-[#c0c0c6]" /></div>
          <span className="ml-[9px] pb-[1px]">{t}</span>
        </div>
      ))}
    </div>
  </div>
);

export default function App() {
  return (
    <div className="h-[960px] w-[1903px] overflow-hidden bg-[#f4f4f5] font-['Noto_Sans','Noto_Sans_CJK_JP',sans-serif]">
      <div className="ml-[4px] h-[956px] w-[1896px] overflow-hidden rounded-l-lg border-b border-l border-[#c4c4c6] bg-white">
        <GlobalHeader />
        <AppBar />
        <ToolBar />
        <HRuler />
        <div className="flex h-[772px]">
          <VRuler />
          <div className="relative flex-1 overflow-hidden">
            <Backdrop />
            <Sheet />
            <ComponentsPanel />
            <OverviewPanel />
            <div className="absolute left-[1391px] top-[1px] h-[736px] w-[200px] shadow-[0_1px_5px_rgba(0,0,0,0.35)]" />
            <div className="absolute left-[1601px] top-[1px] h-[736px] w-[270px] shadow-[0_1px_5px_rgba(0,0,0,0.35)]" />
            <StructurePanel />
            <PropertiesPanel />
          </div>
        </div>
      </div>
    </div>
  );
}
